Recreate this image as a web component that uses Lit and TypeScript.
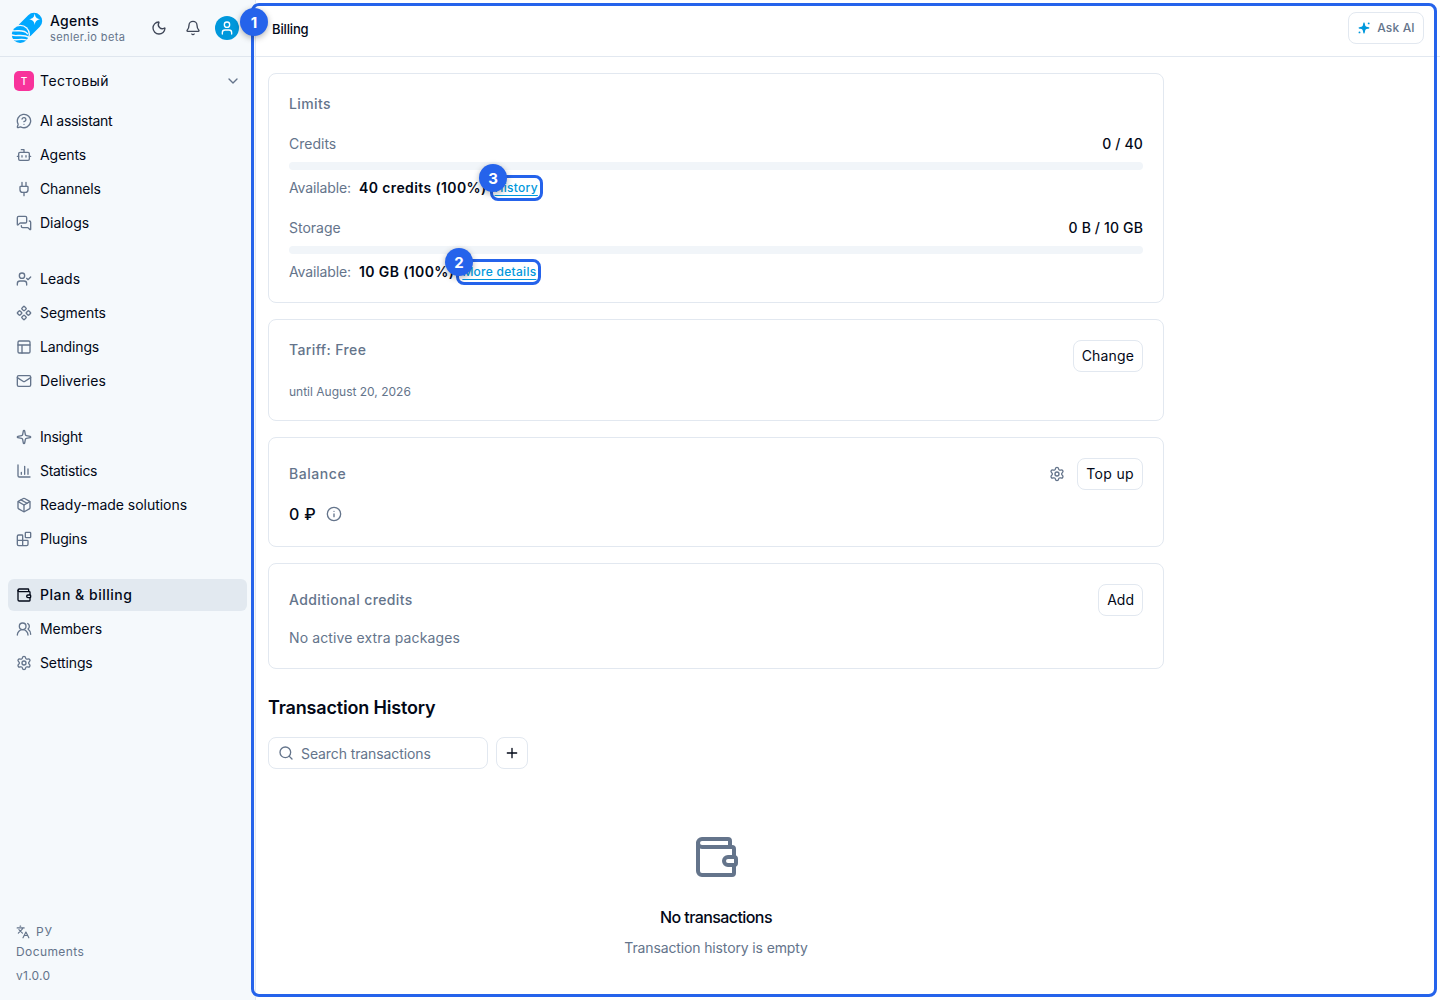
import { LitElement, html, css, svg } from "lit";
import { customElement, property } from "lit/decorators.js";

const icons: Record<string, unknown> = {
  question: svg`<path d="M2.992 16.342a2 2 0 0 1 .094 1.167l-1.065 3.29a1 1 0 0 0 1.236 1.168l3.413-.998a2 2 0 0 1 1.099.092 10 10 0 1 0-4.777-4.719"/><path d="M9.09 9a3 3 0 0 1 5.83 1c0 2-3 3-3 3"/><path d="M12 17h.01"/>`,
  bot: svg`<path d="M12 8V4H8"/><rect width="16" height="12" x="4" y="8" rx="2"/><path d="M2 14h2M20 14h2M15 13v2M9 13v2"/>`,
  plug: svg`<path d="M12 22v-5M15 8V2M9 8V2"/><path d="M17 8a1 1 0 0 1 1 1v4a4 4 0 0 1-4 4h-4a4 4 0 0 1-4-4V9a1 1 0 0 1 1-1z"/>`,
  messages: svg`<path d="M16 10a2 2 0 0 1-2 2H6.828a2 2 0 0 0-1.414.586l-2.202 2.202A.71.71 0 0 1 2 14.286V4a2 2 0 0 1 2-2h10a2 2 0 0 1 2 2z"/><path d="M20 9a2 2 0 0 1 2 2v10.286a.71.71 0 0 1-1.212.502l-2.202-2.202A2 2 0 0 0 17.172 19H10a2 2 0 0 1-2-2v-1"/>`,
  userCheck: svg`<path d="m16 11 2 2 4-4"/><path d="M16 21v-2a4 4 0 0 0-4-4H6a4 4 0 0 0-4 4v2"/><circle cx="9" cy="7" r="4"/>`,
  component: svg`<path d="M15.536 11.293a1 1 0 0 0 0 1.414l2.376 2.377a1 1 0 0 0 1.414 0l2.377-2.377a1 1 0 0 0 0-1.414l-2.377-2.377a1 1 0 0 0-1.414 0z"/><path d="M2.297 11.293a1 1 0 0 0 0 1.414l2.377 2.377a1 1 0 0 0 1.414 0l2.377-2.377a1 1 0 0 0 0-1.414L6.088 8.916a1 1 0 0 0-1.414 0z"/><path d="M8.916 17.912a1 1 0 0 0 0 1.415l2.377 2.376a1 1 0 0 0 1.414 0l2.377-2.376a1 1 0 0 0 0-1.415l-2.377-2.376a1 1 0 0 0-1.414 0z"/><path d="M8.916 4.674a1 1 0 0 0 0 1.414l2.377 2.376a1 1 0 0 0 1.414 0l2.377-2.376a1 1 0 0 0 0-1.414l-2.377-2.377a1 1 0 0 0-1.414 0z"/>`,
  panels: svg`<rect width="18" height="18" x="3" y="3" rx="2"/><path d="M3 9h18M9 21V9"/>`,
  mail: svg`<path d="m22 7-8.991 5.727a2 2 0 0 1-2.009 0L2 7"/><rect x="2" y="4" width="20" height="16" rx="2"/>`,
  sparkle: svg`<path d="M11.017 2.814a1 1 0 0 1 1.966 0l1.051 5.558a2 2 0 0 0 1.594 1.594l5.558 1.051a1 1 0 0 1 0 1.966l-5.558 1.051a2 2 0 0 0-1.594 1.594l-1.051 5.558a1 1 0 0 1-1.966 0l-1.051-5.558a2 2 0 0 0-1.594-1.594l-5.558-1.051a1 1 0 0 1 0-1.966l5.558-1.051a2 2 0 0 0 1.594-1.594z"/>`,
  chart: svg`<path d="M3 3v16a2 2 0 0 0 2 2h16M18 17V9M13 17V5M8 17v-3"/>`,
  pkg: svg`<path d="M11 21.73a2 2 0 0 0 2 0l7-4A2 2 0 0 0 21 16V8a2 2 0 0 0-1-1.73l-7-4a2 2 0 0 0-2 0l-7 4A2 2 0 0 0 3 8v8a2 2 0 0 0 1 1.73z"/><path d="M12 22V12"/><path d="M3.29 7 12 12l8.71-5"/><path d="m7.5 4.27 9 5.15"/>`,
  blocks: svg`<path d="M10 22V7a1 1 0 0 0-1-1H4a2 2 0 0 0-2 2v12a2 2 0 0 0 2 2h12a2 2 0 0 0 2-2v-5a1 1 0 0 0-1-1H2"/><rect x="14" y="2" width="8" height="8" rx="1"/>`,
  wallet: svg`<path d="M19 7V4a1 1 0 0 0-1-1H5a2 2 0 0 0 0 4h15a1 1 0 0 1 1 1v4h-3a2 2 0 0 0 0 4h3a1 1 0 0 0 1-1v-2a1 1 0 0 0-1-1"/><path d="M3 5v14a2 2 0 0 0 2 2h15a1 1 0 0 0 1-1v-4"/>`,
  users: svg`<path d="M18 21a8 8 0 0 0-16 0"/><circle cx="10" cy="8" r="5"/><path d="M22 20c0-3.37-2-6.5-4-8a5 5 0 0 0-.45-8.3"/>`,
  settings: svg`<path d="M9.671 4.136a2.34 2.34 0 0 1 4.659 0 2.34 2.34 0 0 0 3.319 1.915 2.34 2.34 0 0 1 2.33 4.033 2.34 2.34 0 0 0 0 3.831 2.34 2.34 0 0 1-2.33 4.033 2.34 2.34 0 0 0-3.319 1.915 2.34 2.34 0 0 1-4.659 0 2.34 2.34 0 0 0-3.32-1.915 2.34 2.34 0 0 1-2.33-4.033 2.34 2.34 0 0 0 0-3.831A2.34 2.34 0 0 1 6.35 6.051a2.34 2.34 0 0 0 3.319-1.915"/><circle cx="12" cy="12" r="3"/>`,
  moon: svg`<path d="M20.985 12.486a9 9 0 1 1-9.473-9.472c.405-.022.617.46.402.803a6 6 0 0 0 8.268 8.268c.344-.215.825-.004.803.401"/>`,
  bell: svg`<path d="M10.268 21a2 2 0 0 0 3.464 0"/><path d="M3.262 15.326A1 1 0 0 0 4 17h16a1 1 0 0 0 .74-1.673C19.41 13.956 18 12.499 18 8A6 6 0 0 0 6 8c0 4.499-1.411 5.956-2.738 7.326"/>`,
  user: svg`<path d="M19 21v-2a4 4 0 0 0-4-4H9a4 4 0 0 0-4 4v2"/><circle cx="12" cy="7" r="4"/>`,
  chevron: svg`<path d="m6 9 6 6 6-6"/>`,
  languages: svg`<path d="m5 8 6 6M4 14l6-6 2-3M2 5h12M7 2h1M22 22l-5-10-5 10M14 18h6"/>`,
  info: svg`<circle cx="12" cy="12" r="10"/><path d="M12 16v-4M12 8h.01"/>`,
  search: svg`<path d="m21 21-4.34-4.34"/><circle cx="11" cy="11" r="8"/>`,
  plus: svg`<path d="M5 12h14M12 5v14"/>`,
};

@customElement("line-icon")
class LineIcon extends LitElement {
  @property() name = "";
  @property({ type: Number }) size = 16;
  @property({ type: Number }) weight = 2;
  static styles = css`
    :host { display: inline-flex; flex: none; }
    svg { display: block; fill: none; stroke: currentColor; stroke-linecap: round; stroke-linejoin: round; }
  `;
  render() {
    return html`<svg width=${this.size} height=${this.size} viewBox="0 0 24 24" stroke-width=${this.weight}>${icons[this.name]}</svg>`;
  }
}

// icon, label, letter tracking in px
const groups: [string, string, number][][] = [
  [["question", "AI assistant", -0.33], ["bot", "Agents", -0.05], ["plug", "Channels", -0.12], ["messages", "Dialogs", 0]],
  [["userCheck", "Leads", 0], ["component", "Segments", -0.04], ["panels", "Landings", -0.15], ["mail", "Deliveries", 0.08]],
  [["sparkle", "Insight", -0.3], ["chart", "Statistics", -0.3], ["pkg", "Ready-made solutions", -0.03], ["blocks", "Plugins", -0.15]],
  [["wallet", "Plan & billing", 0.5], ["users", "Members", -0.07], ["settings", "Settings", -0.12]],
];

@customElement("side-bar")
class SideBar extends LitElement {
  static styles = css`
    :host { display: flex; flex-direction: column; width: 256px; box-sizing: border-box; flex: none; background: #f5f9fc; border-right: 1px solid #e2e8f0; }
    .head { height: 56px; border-bottom: 1px solid #dfe6ee; display: flex; align-items: center; padding: 0 16px 0 11px; }
    .logo { display: block; flex: none; }
    .brand { margin-left: 7px; flex: 1; }
    .name { font-size: 14px; line-height: 16px; font-weight: 500; letter-spacing: 0.3px; }
    .sub { font-size: 11px; line-height: 14px; color: #64748b; letter-spacing: 0.4px; margin-top: 1px; margin-bottom: -1px; }
    .tools { display: flex; align-items: center; gap: 18px; color: #3f4758; }
    .avatar { width: 24px; height: 24px; border-radius: 50%; background: #0098dc; color: #fff; display: flex; align-items: center; justify-content: center; margin-left: -4px; }
    .team { height: 48px; display: flex; align-items: center; padding: 0 14px; font-size: 14px; letter-spacing: 0.48px; }
    .chip { width: 20px; height: 20px; border-radius: 5px; background: #f8339b; color: #fff; font-size: 10px; font-weight: 500; letter-spacing: 0; display: flex; align-items: center; justify-content: center; margin-right: 6px; }
    .team span { flex: 1; }
    .team line-icon { color: #64748b; }
    nav { display: flex; flex-direction: column; gap: 24px; padding: 0 8px; flex: 1; }
    .group { display: flex; flex-direction: column; gap: 2px; }
    .item { height: 32px; border-radius: 6px; display: flex; align-items: center; gap: 8px; padding: 0 8px; font-size: 14px; }
    .item line-icon { color: #64748b; }
    .item.active { background: #e2e9f0; font-weight: 500; }
    .item.active line-icon { color: #020817; }
    .foot { padding: 0 16px 12px; font-size: 12px; letter-spacing: 0.4px; color: #64748b; }
    .lang { display: flex; align-items: center; gap: 6px; height: 16px; margin-bottom: 4px; letter-spacing: 0.8px; }
    .doc { line-height: 16px; margin-bottom: 4px; }
    .ver { line-height: 24px; letter-spacing: 0.25px; }
  `;
  render() {
    return html`
      <div class="head">
        <svg class="logo" width="32" height="32" viewBox="0 0 32 32" fill="none" stroke-linecap="round">
          <path d="M23 9 14 18" stroke="#00a8ff" stroke-width="16.400"/>
          <circle cx="9.200" cy="22.500" r="9.800" fill="#f5f9fc"/>
          <circle cx="9.200" cy="22.500" r="8.500" fill="#00a8ff"/>
          <path d="M23.700 1.600c.7 4 1.700 5 5.500 5.700-3.800.8-4.800 1.800-5.500 5.700-.7-3.900-1.800-4.900-5.600-5.700 3.800-.7 4.900-1.700 5.600-5.700Z" fill="#fff"/>
          <path d="M0 18.500c5 1.500 12.500-2.300 16.500 3.300M0 22.700c4.500 2.800 11-1.800 18.500 3M1 27.300c4 1.600 9.500-1.400 15.500 1" stroke="#f5f9fc" stroke-width="1.400"/>
        </svg>
        <div class="brand"><div class="name">Agents</div><div class="sub">senler.io beta</div></div>
        <div class="tools">
          <line-icon name="moon"></line-icon>
          <line-icon name="bell"></line-icon>
          <div class="avatar"><line-icon name="user"></line-icon></div>
        </div>
      </div>
      <div class="team"><div class="chip">Т</div><span>Тестовый</span><line-icon name="chevron"></line-icon></div>
      <nav>
        ${groups.map((g) => html`<div class="group">${g.map(([icon, label, track]) => html`
          <div class="item ${icon === "wallet" ? "active" : ""}" style="letter-spacing:${track}px"><line-icon name=${icon}></line-icon>${label}</div>`)}</div>`)}
      </nav>
      <div class="foot">
        <div class="lang"><line-icon name="languages" .size=${14}></line-icon>РУ</div>
        <div class="doc">Documents</div>
        <div class="ver">v1.0.0</div>
      </div>`;
  }
}

@customElement("app-root")
class AppRoot extends LitElement {
  static styles = css`
    :host { display: flex; position: relative; width: 1440px; height: 1000px; overflow: hidden; background: #fff; color: #020817; font-family: Inter, "Liberation Sans", sans-serif; font-size: 14px; line-height: 20px; }
    * { box-sizing: border-box; }
    main { flex: 1; display: flex; flex-direction: column; }
    .bar { height: 57px; flex: none; border-bottom: 1px solid #e2e8f0; display: flex; align-items: center; justify-content: space-between; padding: 0 16px; font-size: 13px; font-weight: 500; letter-spacing: -0.15px; }
    .crumb { padding-top: 2px; }
    .btn { height: 32px; border: 1px solid #e2e8f0; border-radius: 8px; padding: 0 8px; display: flex; align-items: center; justify-content: center; background: #fff; }
    .ask { color: #64748b; font-size: 12px; letter-spacing: 0.15px; gap: 6px; width: 76px; }
    .ask svg { display: block; }
    .change { letter-spacing: 0.15px; }
    .topup { letter-spacing: 0.33px; }
    .content { width: 896px; margin: 16px 0 0 12px; display: flex; flex-direction: column; gap: 16px; }
    .card { border: 1px solid #e2e8f0; border-radius: 8px; padding: 20px; }
    .title { font-weight: 500; color: #64748b; letter-spacing: 0.38px; }
    .title.wide { letter-spacing: 0.55px; }
    .row { display: flex; justify-content: space-between; align-items: center; }
    .row.top { align-items: flex-start; }
    .muted { color: #64748b; }
    .med { font-weight: 500; letter-spacing: 0.14px; }
    .limit { margin-top: 20px; }
    .track { height: 8px; border-radius: 4px; background: #f1f5f9; margin: 8px 0; }
    .avail { display: flex; gap: 8px; }
    .avail .muted { letter-spacing: -0.12px; }
    .amount { font-weight: 600; letter-spacing: 0.38px; }
    .link { font-size: 12px; font-weight: 500; letter-spacing: 0.27px; color: #0098dc; text-decoration: underline; text-underline-offset: 3px; }
    .until { font-size: 12px; line-height: 16px; margin-top: 12px; }
    .actions { display: flex; align-items: center; gap: 12px; }
    .balance { margin-top: 12px; font-size: 16px; line-height: 24px; font-weight: 500; letter-spacing: 0.3px; display: flex; align-items: center; gap: 10px; }
    .extra { margin-top: 12px; letter-spacing: 0.12px; }
    h2 { margin: 8px 0 0; padding-top: 1px; font-size: 18px; line-height: 27px; font-weight: 600; letter-spacing: -0.17px; }
    .filters { display: flex; gap: 8px; }
    .search { width: 220px; justify-content: flex-start; gap: 7px; padding: 0 9px; color: #64748b; letter-spacing: -0.1px; }
    .search span { padding-top: 2px; }
    .plus { width: 32px; padding: 0; }
    .empty { display: flex; flex-direction: column; align-items: center; margin-top: 48px; }
    .empty h3 { margin: 24px 0 9px; font-size: 16px; line-height: 24px; font-weight: 500; letter-spacing: -0.58px; }
    .empty span { letter-spacing: -0.13px; }
    .frame { position: absolute; border: 3px solid #2563eb; border-radius: 8px; }
    .page { left: 251px; top: 3px; width: 1186px; height: 994px; }
    .history { left: 490px; top: 175px; width: 53px; height: 26px; }
    .details { left: 456px; top: 259px; width: 85px; height: 26px; }
    .badge { position: absolute; width: 28px; height: 28px; border-radius: 50%; background: #2563eb; color: #fff; font-weight: 700; font-size: 15px; line-height: 29px; text-align: center; box-shadow: 0 2px 6px rgba(0, 0, 0, 0.3); }
    .b1 { left: 240px; top: 8px; }
    .b2 { left: 445px; top: 248px; }
    .b3 { left: 479px; top: 164px; }
  `;
  render() {
    return html`
      <side-bar></side-bar>
      <main>
        <div class="bar">
          <span class="crumb">Billing</span>
          <div class="btn ask">
            <svg width="14" height="14" viewBox="0 0 14 14" fill="#0098dc"><path d="M7 1.500c.5 0 .65.4.85 1.500.4 2.300.8 2.700 3 3.100 1.100.2 1.500.35 1.500.85s-.4.65-1.500.85c-2.200.4-2.600.8-3 3.100-.2 1.100-.35 1.500-.85 1.500s-.65-.4-.85-1.500c-.4-2.300-.8-2.700-3-3.100-1.100-.2-1.500-.35-1.500-.85s.4-.65 1.500-.85c2.200-.4 2.600-.8 3-3.100.2-1.100.35-1.500.85-1.500Z"/><circle cx="11.700" cy="2.400" r=".95"/><circle cx="2.500" cy="11.400" r=".95"/></svg>
            Ask AI
          </div>
        </div>
        <div class="content">
          <div class="card">
            <div class="title">Limits</div>
            <div class="limit">
              <div class="row"><span class="muted">Credits</span><span class="med">0 / 40</span></div>
              <div class="track"></div>
              <div class="avail"><span class="muted">Available:</span><span class="amount">40 credits (100%)</span><span class="link">History</span></div>
            </div>
            <div class="limit">
              <div class="row"><span class="muted">Storage</span><span class="med">0 B / 10 GB</span></div>
              <div class="track"></div>
              <div class="avail"><span class="muted">Available:</span><span class="amount">10 GB (100%)</span><span class="link">More details</span></div>
            </div>
          </div>
          <div class="card">
            <div class="row top"><span class="title">Tariff: Free</span><div class="btn change">Change</div></div>
            <div class="until muted">until August 20, 2026</div>
          </div>
          <div class="card">
            <div class="row"><span class="title wide">Balance</span>
              <div class="actions"><line-icon class="muted" name="settings"></line-icon><div class="btn topup">Top up</div></div>
            </div>
            <div class="balance">0 ₽<line-icon class="muted" name="info"></line-icon></div>
          </div>
          <div class="card">
            <div class="row"><span class="title">Additional credits</span><div class="btn">Add</div></div>
            <div class="extra muted">No active extra packages</div>
          </div>
          <h2>Transaction History</h2>
          <div class="filters">
            <div class="btn search"><line-icon name="search"></line-icon><span>Search transactions</span></div>
            <div class="btn plus"><line-icon name="plus"></line-icon></div>
          </div>
          <div class="empty">
            <line-icon class="muted" name="wallet" .size=${48}></line-icon>
            <h3>No transactions</h3>
            <span class="muted">Transaction history is empty</span>
          </div>
        </div>
      </main>
      <div class="frame page"></div>
      <div class="frame details"></div>
      <div class="frame history"></div>
      <div class="badge b1">1</div>
      <div class="badge b2">2</div>
      <div class="badge b3">3</div>`;
  }
}
